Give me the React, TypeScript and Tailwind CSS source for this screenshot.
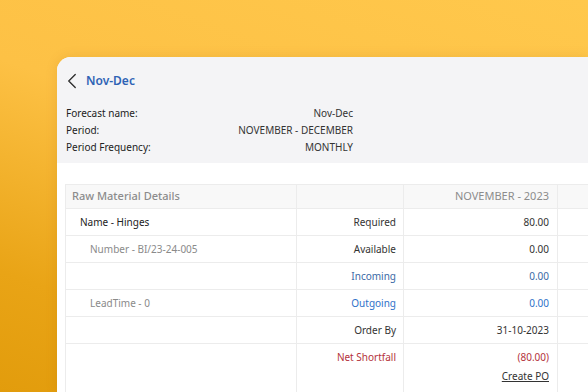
import { ChevronLeft } from "lucide-react";

const rows = [
  { name: "Name - Hinges", nameCls: "pl-[14px] text-[#222]", label: "Required", labelCls: "text-[#333]", value: "80.00", valueCls: "text-[#333]" },
  { name: "Number - BI/23-24-005", nameCls: "pl-[24px] text-[#8a8a8a]", label: "Available", labelCls: "text-[#333]", value: "0.00", valueCls: "text-[#333]" },
  { name: "", nameCls: "", label: "Incoming", labelCls: "text-[#3b6aa6]", value: "0.00", valueCls: "text-[#3b6aa6]" },
  { name: "LeadTime - 0", nameCls: "pl-[24px] text-[#8a8a8a]", label: "Outgoing", labelCls: "text-[#2f72c9]", value: "0.00", valueCls: "text-[#2f72c9]" },
  { name: "", nameCls: "", label: "Order By", labelCls: "text-[#333]", value: "31-10-2023", valueCls: "text-[#333]" },
];

export default function App() {
  return (
    <div className="flex h-[392px] w-[588px] overflow-hidden bg-[linear-gradient(200deg,#ffc84c_0%,#fdc145_45%,#e9a416_80%,#e29c0c_100%)] pl-[57px] pt-[57px] font-['Noto_Sans',sans-serif]">
      <div className="flex flex-1 flex-col overflow-hidden rounded-tl-[14px] bg-white shadow-[0_0_12px_rgba(150,90,0,0.15)]">
        <div className="bg-[#f4f4f6] pb-[7px] pl-[9px] pr-[235px] pt-[14px]">
          <div className="flex h-[20px] items-center gap-[1px]">
            <ChevronLeft className="-my-[4px] -ml-[7px] h-[26px] w-[26px] text-[#333]" strokeWidth={1.3} />
            <span className="text-[12px] font-semibold text-[#2f63b5]">Nov-Dec</span>
          </div>
          <div className="mt-[14px] flex flex-col text-[10px] leading-[17px] text-[#222]">
            <div className="flex justify-between"><span>Forecast name:</span><span className="text-[#333]">Nov-Dec</span></div>
            <div className="flex justify-between"><span>Period:</span><span className="text-[#333]">NOVEMBER - DECEMBER</span></div>
            <div className="flex justify-between"><span>Period Frequency:</span><span className="text-[#333]">MONTHLY</span></div>
          </div>
        </div>
        <div className="pl-[8px] pt-[21px]">
          <div className="grid grid-cols-[231px_107px_154px_40px] border-l border-t border-[#ececec] text-[10px]">
            <div className="flex h-[24px] items-center border-b border-r border-[#ececec] bg-[#f8f8f8] pl-[6px] text-[11px] font-medium text-[#8c8c8c]">Raw Material Details</div>
            <div className="h-[24px] border-b border-r border-[#ececec] bg-[#f8f8f8]"></div>
            <div className="flex h-[24px] items-center justify-end border-b border-r border-[#ececec] bg-[#f8f8f8] pr-[8px] text-[11px] text-[#8c8c8c]">NOVEMBER - 2023</div>
            <div className="h-[24px] border-b border-[#ececec] bg-[#f8f8f8]"></div>
            {rows.map((r, i) => (
              <div key={i} className="contents">
                <div className={`flex h-[27px] items-center border-b border-r border-[#ececec] ${r.nameCls}`}>{r.name}</div>
                <div className={`flex h-[27px] items-center justify-end border-b border-r border-[#ececec] pr-[7px] ${r.labelCls}`}>{r.label}</div>
                <div className={`flex h-[27px] items-center justify-end border-b border-r border-[#ececec] pr-[8px] ${r.valueCls}`}>{r.value}</div>
                <div className="h-[27px] border-b border-[#ececec]"></div>
              </div>
            ))}
            <div className="h-[60px] border-r border-[#ececec]"></div>
            <div className="flex h-[60px] justify-end border-r border-[#ececec] pr-[7px] pt-[6px] text-[#b4323c]">Net Shortfall</div>
            <div className="flex h-[60px] flex-col items-end border-r border-[#ececec] pr-[8px] pt-[6px]">
              <span className="text-[#b4323c]">(80.00)</span>
              <span className="mt-[4px] text-[#333] underline">Create PO</span>
            </div>
            <div className="h-[60px]"></div>
          </div>
        </div>
      </div>
    </div>
  );
}
